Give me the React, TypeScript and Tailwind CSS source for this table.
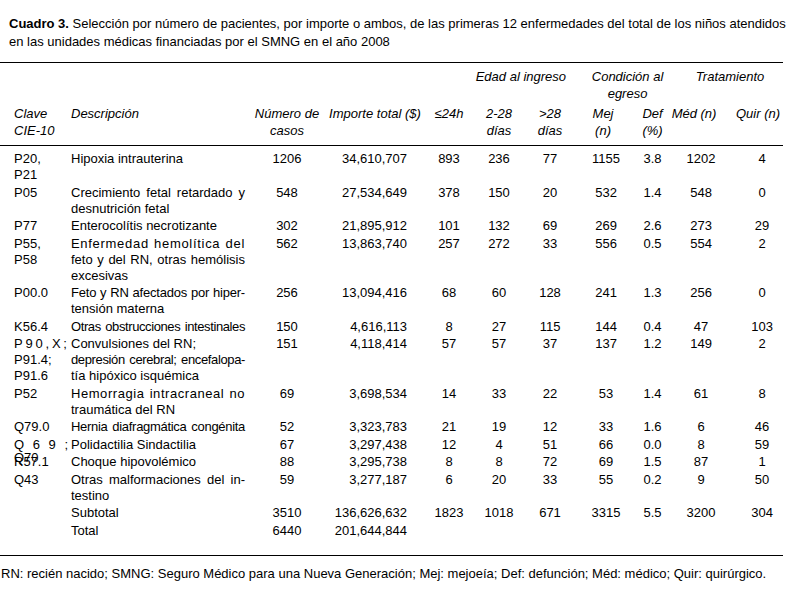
import React from 'react';

type Line = { t: string; j?: boolean; tr?: string };

type Row = {
  clave: string[];
  spread?: string[];
  overlap?: boolean;
  desc: Line[];
  values: string[];
};

const rows: Row[] = [
  {
    clave: ['P20,', 'P21'],
    desc: [{ t: 'Hipoxia intrauterina' }],
    values: ['1206', '34,610,707', '893', '236', '77', '1155', '3.8', '1202', '4'],
  },
  {
    clave: ['P05'],
    desc: [{ t: 'Crecimiento fetal retardado y', j: true }, { t: 'desnutrición fetal' }],
    values: ['548', '27,534,649', '378', '150', '20', '532', '1.4', '548', '0'],
  },
  {
    clave: ['P77'],
    desc: [{ t: 'Enterocolítis necrotizante' }],
    values: ['302', '21,895,912', '101', '132', '69', '269', '2.6', '273', '29'],
  },
  {
    clave: ['P55,', 'P58'],
    desc: [
      { t: 'Enfermedad hemolítica del', j: true, tr: 'tracking-[0.7px]' },
      { t: 'feto y del RN, otras hemólisis', j: true },
      { t: 'excesivas' },
    ],
    values: ['562', '13,863,740', '257', '272', '33', '556', '0.5', '554', '2'],
  },
  {
    clave: ['P00.0'],
    desc: [{ t: 'Feto y RN afectados por hiper-', j: true, tr: 'tracking-[-0.2px]' }, { t: 'tensión materna' }],
    values: ['256', '13,094,416', '68', '60', '128', '241', '1.3', '256', '0'],
  },
  {
    clave: ['K56.4'],
    desc: [{ t: 'Otras obstrucciones intestinales', j: true, tr: 'tracking-[-0.4px]' }],
    values: ['150', '4,616,113', '8', '27', '115', '144', '0.4', '47', '103'],
  },
  {
    clave: ['P91.4;', 'P91.6'],
    spread: ['P', '9', '0', ',', 'X', ';'],
    desc: [
      { t: 'Convulsiones del RN;' },
      { t: 'depresión cerebral; encefalopa-', j: true, tr: 'tracking-[-0.36px]' },
      { t: 'tía hipóxico isquémica' },
    ],
    values: ['151', '4,118,414', '57', '57', '37', '137', '1.2', '149', '2'],
  },
  {
    clave: ['P52'],
    desc: [{ t: 'Hemorragia intracraneal no', j: true, tr: 'tracking-[0.55px]' }, { t: 'traumática del RN' }],
    values: ['69', '3,698,534', '14', '33', '22', '53', '1.4', '61', '8'],
  },
  {
    clave: ['Q79.0'],
    desc: [{ t: 'Hernia diafragmática congénita', j: true, tr: 'tracking-[-0.3px]' }],
    values: ['52', '3,323,783', '21', '19', '12', '33', '1.6', '6', '46'],
  },
  {
    clave: ['Q70'],
    spread: ['Q', '6', '9', ';'],
    overlap: true,
    desc: [{ t: 'Polidactilia Sindactilia' }],
    values: ['67', '3,297,438', '12', '4', '51', '66', '0.0', '8', '59'],
  },
  {
    clave: ['R57.1'],
    desc: [{ t: 'Choque hipovolémico' }],
    values: ['88', '3,295,738', '8', '8', '72', '69', '1.5', '87', '1'],
  },
  {
    clave: ['Q43'],
    desc: [{ t: 'Otras malformaciones del in-', j: true }, { t: 'testino' }],
    values: ['59', '3,277,187', '6', '20', '33', '55', '0.2', '9', '50'],
  },
  {
    clave: [],
    desc: [{ t: 'Subtotal' }],
    values: ['3510', '136,626,632', '1823', '1018', '671', '3315', '5.5', '3200', '304'],
  },
  {
    clave: [],
    desc: [{ t: 'Total' }],
    values: ['6440', '201,644,844', '', '', '', '', '', '', ''],
  },
];

// alignment of each numeric column (Número .. Quir)
const valueCell = [
  'text-center',
  'text-right pr-[17px]',
  'text-center',
  'text-center',
  'text-center',
  'text-center',
  'text-center',
  'text-center',
  'text-center pl-[8px]',
];

const ClaveCell = ({ row }: { row: Row }) => {
  if (row.overlap && row.spread) {
    // second line runs into the next row, as in the printed table
    return (
      <div className="h-[16px] w-[54px]">
        <div className="flex justify-between">
          {row.spread.map((c, i) => (
            <span key={i}>{c}</span>
          ))}
        </div>
        <div className="-mt-[3px]">{row.clave[0]}</div>
      </div>
    );
  }
  return (
    <div>
      {row.spread && (
        <div className="flex w-[53px] justify-between">
          {row.spread.map((c, i) => (
            <span key={i}>{c}</span>
          ))}
        </div>
      )}
      {row.clave.map((c, i) => (
        <div key={i}>{c}</div>
      ))}
    </div>
  );
};

const App = () => {
  return (
    <div className="h-[589px] w-[793px] bg-white font-['Liberation_Sans',Arial,sans-serif] text-[13px] text-black">
      <div className="pl-[9px] pt-[15px] leading-[18px]">
        <p>
          <b>Cuadro 3.</b> Selección por número de pacientes, por importe o ambos, de las primeras 12 enfermedades del total de los niños atendidos
          <br />
          en las unidades médicas financiadas por el SMNG en el año 2008
        </p>
      </div>

      <table className="mt-[11px] w-[783px] table-fixed border-collapse">
        <colgroup>
          <col className="w-[68px]" />
          <col className="w-[180px]" />
          <col className="w-[78px]" />
          <col className="w-[98px]" />
          <col className="w-[50px]" />
          <col className="w-[50px]" />
          <col className="w-[52px]" />
          <col className="w-[60px]" />
          <col className="w-[33px]" />
          <col className="w-[64px]" />
          <col className="w-[50px]" />
        </colgroup>
        <thead className="italic leading-[17px]">
          <tr className="border-t border-black align-top">
            <th colSpan={4} className="pt-[5px]" />
            <th colSpan={3} className="pt-[5px] pr-[10px] text-right font-normal">
              Edad al ingreso
            </th>
            <th colSpan={2} className="pt-[5px] pl-[10px] text-center font-normal">
              Condición al
              <br />
              egreso
            </th>
            <th colSpan={2} className="pt-[5px] pl-[8px] text-center font-normal">
              Tratamiento
            </th>
          </tr>
          <tr className="border-b border-black align-top font-normal">
            <th className="pt-[3px] pb-[6px] pl-[14px] text-left font-normal">
              Clave
              <br />
              CIE-10
            </th>
            <th className="pt-[3px] pl-[3px] text-left font-normal">Descripción</th>
            <th className="pt-[3px] text-center font-normal">
              Número de
              <br />
              casos
            </th>
            <th className="pt-[3px] text-center font-normal">Importe total ($)</th>
            <th className="pt-[3px] text-center font-normal">≤24h</th>
            <th className="pt-[3px] text-center font-normal">
              2-28
              <br />
              días
            </th>
            <th className="pt-[3px] text-center font-normal">
              &gt;28
              <br />
              días
            </th>
            <th className="pt-[3px] pr-[6px] text-center font-normal">
              Mej
              <br />
              (n)
            </th>
            <th className="pt-[3px] text-center font-normal">
              Def
              <br />
              (%)
            </th>
            <th className="pt-[3px] pr-[14px] text-center font-normal">Méd (n)</th>
            <th className="pt-[3px] pr-[3px] text-right font-normal">Quir (n)</th>
          </tr>
        </thead>
        <tbody className="leading-[16px]">
          {rows.map((row, ri) => {
            const pad =
              ri === 0 ? 'pt-[5px] pb-[0.75px]' : ri === rows.length - 1 ? 'pt-[0.75px] pb-[16px]' : 'py-[0.75px]';
            return (
              <tr key={ri} className={`align-top ${ri === rows.length - 1 ? 'border-b border-black' : ''}`}>
                <td className={`pl-[14px] ${pad}`}>
                  <ClaveCell row={row} />
                </td>
                <td className={`pl-[3px] ${pad}`}>
                  {row.desc.map((l, li) =>
                    l.j ? (
                      <div key={li} className={`w-[174px] text-justify [text-align-last:justify] ${l.tr ?? ''}`}>
                        {l.t}
                      </div>
                    ) : (
                      <div key={li}>{l.t}</div>
                    )
                  )}
                </td>
                {row.values.map((v, vi) => (
                  <td key={vi} className={`${valueCell[vi]} ${pad}`}>
                    {v}
                  </td>
                ))}
              </tr>
            );
          })}
        </tbody>
      </table>

      <p className="mt-[10px] pl-[1px] leading-[16px]">
        RN: recién nacido; SMNG: Seguro Médico para una Nueva Generación; Mej: mejoeía; Def: defunción; Méd: médico; Quir: quirúrgico.
      </p>
    </div>
  );
};

export default App;
